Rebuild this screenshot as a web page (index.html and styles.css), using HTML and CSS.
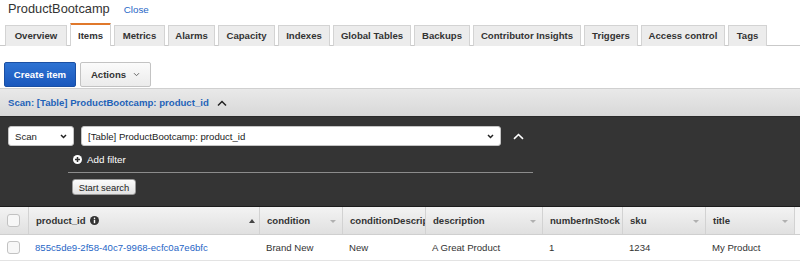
FILE: index.html
```html
<!DOCTYPE html>
<html>
<head>
<meta charset="utf-8">
<link rel="stylesheet" href="styles.css">
</head>
<body>
<div class="title-row">
  <span class="title">ProductBootcamp</span>
  <a class="close">Close</a>
</div>
<div class="tabs">
  <div class="tab t1">Overview</div>
  <div class="tab t2 active">Items</div>
  <div class="tab t3">Metrics</div>
  <div class="tab t4">Alarms</div>
  <div class="tab t5">Capacity</div>
  <div class="tab t6">Indexes</div>
  <div class="tab t7">Global Tables</div>
  <div class="tab t8">Backups</div>
  <div class="tab t9">Contributor Insights</div>
  <div class="tab t10">Triggers</div>
  <div class="tab t11">Access control</div>
  <div class="tab t12">Tags</div>
</div>
<div class="toolbar">
  <button class="btn primary">Create item</button>
  <button class="btn secondary">Actions <svg class="caret" width="7" height="5" viewBox="0 0 7 5"><path d="M1 1.2l2.5 2.5 2.5-2.5" fill="none" stroke="#666" stroke-width="1"/></svg></button>
</div>
<div class="scanbar">
  <span class="scan-label">Scan: [Table] ProductBootcamp: product_id</span>
  <svg class="up" width="10" height="7" viewBox="0 0 10 7"><path d="M1 5.5L5 1.5l4 4" fill="none" stroke="#222" stroke-width="1.5"/></svg>
</div>
<div class="panel">
  <div class="panel-row">
    <div class="select small">Scan<svg class="sel-caret" width="7" height="5" viewBox="0 0 7 5"><path d="M1 1l2.5 2.5 2.5-2.5" fill="none" stroke="#222" stroke-width="1.5"/></svg></div>
    <div class="select wide">[Table] ProductBootcamp: product_id<svg class="sel-caret" width="7" height="5" viewBox="0 0 7 5"><path d="M1 1l2.5 2.5 2.5-2.5" fill="none" stroke="#222" stroke-width="1.5"/></svg></div>
    <svg class="up-w" width="11" height="7" viewBox="0 0 11 7"><path d="M1 5.8L5.5 1.5 10 5.8" fill="none" stroke="#fff" stroke-width="1.6"/></svg>
  </div>
  <div class="filter-block">
    <div class="add-filter"><svg width="9" height="9" viewBox="0 0 10 10"><circle cx="5" cy="5" r="5" fill="#fff"/><path d="M5 2.2v5.6M2.2 5h5.6" stroke="#333" stroke-width="1.7"/></svg>Add filter</div>
    <div class="divider"></div>
    <button class="start">Start search</button>
  </div>
</div>
<div class="grid">
  <div class="hrow">
    <div class="cell chk"><span class="box"></span></div>
    <div class="cell c1 hd">product_id <svg class="info" width="9" height="9" viewBox="0 0 10 10"><circle cx="5" cy="5" r="5" fill="#333"/><rect x="4.2" y="4.2" width="1.6" height="3.8" fill="#fff"/><circle cx="5" cy="2.6" r="0.9" fill="#fff"/></svg><span class="sort up-s"></span></div>
    <div class="cell c2 hd">condition<span class="sort dn"></span></div>
    <div class="cell c3 hd">conditionDescription</div>
    <div class="cell c4 hd">description<span class="sort dn"></span></div>
    <div class="cell c5 hd">numberInStock</div>
    <div class="cell c6 hd">sku<span class="sort dn"></span></div>
    <div class="cell c7 hd">title<span class="sort dn"></span></div>
    <div class="cell rest"></div>
  </div>
  <div class="drow">
    <div class="cell chk"><span class="box"></span></div>
    <div class="cell c1"><a class="link">855c5de9-2f58-40c7-9968-ecfc0a7e6bfc</a></div>
    <div class="cell c2">Brand New</div>
    <div class="cell c3">New</div>
    <div class="cell c4">A Great Product</div>
    <div class="cell c5">1</div>
    <div class="cell c6">1234</div>
    <div class="cell c7">My Product</div>
  </div>
</div>
</body>
</html>
```
FILE: styles.css
```css
* { box-sizing: border-box; }
body {
  margin: 0;
  font-family: "Liberation Sans", Arial, sans-serif;
  color: #222;
  background: #fff;
  width: 800px;
  height: 275px;
  overflow: hidden;
}
.title-row {
  height: 23px;
  padding-left: 8px;
  display: flex;
  align-items: flex-start;
}
.title { font-size: 12.8px; color: #333; line-height: 15px; margin-top: 1px; }
.close { font-size: 9.8px; color: #1f66c6; line-height: 15px; margin-top: 2px; margin-left: 14px; }
.tabs {
  display: flex;
  align-items: flex-end;
  gap: 3px;
  padding-left: 5px;
  height: 23px;
  border-bottom: 1px solid #c9c9c9;
}
.tab {
  flex: none;
  height: 21px;
  background: #ececec;
  border: 1px solid #d3d3d3;
  border-bottom: none;
  font-size: 9.6px;
  font-weight: bold;
  color: #333;
  line-height: 20px;
  text-align: center;
  white-space: nowrap;
  margin-bottom: -1px;
}
.tab.active {
  background: #fff;
  border-top: 1px solid #e0782b;
  height: 23px;
  line-height: 24px;
  box-shadow: inset 0 1px 0 #e0782b;
}
.t1 { width: 62px; }
.t2 { width: 41px; }
.t3 { width: 51px; }
.t4 { width: 47px; }
.t5 { width: 57px; }
.t6 { width: 52px; }
.t7 { width: 78px; }
.t8 { width: 56px; }
.t9 { width: 108px; }
.t10 { width: 54px; }
.t11 { width: 84px; }
.t12 { width: 39px; }
.toolbar {
  display: flex;
  gap: 4px;
  padding: 16px 0 0 4px;
}
.btn {
  height: 25px;
  font-family: inherit;
  font-size: 9.6px;
  font-weight: bold;
  border-radius: 2px;
  border: 1px solid #c3c3c3;
  background: linear-gradient(#fbfbfb, #ebebeb);
  color: #333;
  display: flex;
  align-items: center;
  justify-content: center;
  white-space: nowrap;
  padding: 0;
}
.btn.primary {
  width: 72px;
  background: linear-gradient(#2e73d3, #1a58bd);
  border-color: #1a4fa3;
  color: #fff;
}
.btn.secondary { width: 71px; gap: 7px; }
.scanbar {
  margin-top: 1px;
  height: 28px;
  background: linear-gradient(#e9e9e9, #d8d8d8);
  border-top: 1px solid #d0d0d0;
  display: flex;
  align-items: center;
  padding-left: 8px;
}
.scan-label { color: #1f63b8; font-size: 9.6px; font-weight: bold; white-space: nowrap; }
.up { margin-left: 8px; margin-top: 1px; }
.panel {
  background: #343434;
  border-top: 1px solid #2a2a2a;
  height: 90px;
  padding-top: 9px;
}
.panel-row {
  display: flex;
  align-items: center;
  padding-left: 8px;
}
.select {
  height: 20px;
  background: #fff;
  border: 1px solid #c4c4c4;
  border-radius: 3px;
  font-size: 9.6px;
  color: #222;
  display: flex;
  align-items: center;
  justify-content: space-between;
  padding: 0 6px 0 6px;
  white-space: nowrap;
}
.select.small { width: 66px; }
.select.wide { width: 420px; margin-left: 7px; }
.up-w { margin-left: 12px; margin-top: 0px; }
.filter-block { margin-left: 68px; width: 465px; }
.add-filter {
  display: flex;
  align-items: center;
  gap: 5px;
  color: #fff;
  font-size: 9.8px;
  height: 12px;
  margin-top: 7px;
  padding-left: 5px;
}
.divider { height: 1px; background: #8c8c8c; margin-top: 7px; }
.start {
  display: block;
  margin: 6px 0 0 4px;
  height: 16px;
  width: 64px;
  font-family: inherit;
  font-size: 9.4px;
  padding: 0;
  background: linear-gradient(#fbfbfb, #e2e2e2);
  border: 1px solid #9a9a9a;
  border-radius: 3px;
  color: #222;
  white-space: nowrap;
}
.grid { border-top: 1px solid #1c1c1c; }
.hrow {
  display: flex;
  height: 28px;
  background: linear-gradient(#f3f3f3, #e0e0e0);
  border-bottom: 1px solid #cfcfcf;
}
.drow {
  display: flex;
  height: 26px;
  border-bottom: 1px solid #e3e3e3;
}
.cell {
  display: flex;
  align-items: center;
  font-size: 9.6px;
  color: #333;
  padding-left: 7px;
  position: relative;
  white-space: nowrap;
  overflow: hidden;
  flex: none;
}
.hd { font-weight: bold; border-left: 1px solid #d2d2d2; }
.chk { width: 28px; padding-left: 7px; }
.box {
  width: 13px; height: 13px;
  border: 1px solid #c2c2c2;
  border-radius: 3px;
  background: #f7f7f7;
}
.drow .cell { padding-left: 7px; }
.drow .c1 { padding-left: 7px; }
.c1 { width: 231px; }
.c2 { width: 83px; }
.c3 { width: 83px; }
.c4 { width: 117px; }
.c5 { width: 80px; }
.c6 { width: 83px; }
.c7 { width: 89px; }
.rest { flex: 1; border-left: 1px solid #d2d2d2; background: #f4f4f4; }
.hd .info { margin-left: 4px; }
.sort {
  position: absolute;
  right: 6px;
  top: 12px;
  width: 0; height: 0;
  border-left: 3px solid transparent;
  border-right: 3px solid transparent;
}
.sort.up-s { border-bottom: 4px solid #444; right: 4px; }
.sort.dn { border-top: 3px solid #b0b0b0; top: 13px; }
.link { color: #1f66c6; }
```
